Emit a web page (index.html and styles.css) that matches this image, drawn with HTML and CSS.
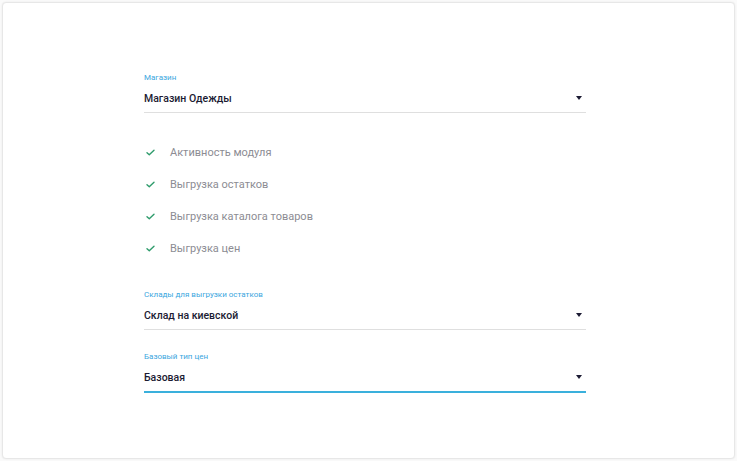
FILE: index.html
```html
<!DOCTYPE html>
<html lang="ru">
<head>
    <meta charset="UTF-8">
    <title>Настройки модуля</title>
    <link rel="stylesheet" href="styles.css">
</head>
<body>
    <div class="card">
        <div class="form">
            <div class="field">
                <div class="field-label">Магазин</div>
                <div class="field-value">
                    <span>Магазин Одежды</span>
                    <span class="arrow"></span>
                </div>
            </div>

            <ul class="checks">
                <li><svg class="check" viewBox="0 0 10 8"><path d="M1 4.2 L3.6 6.6 L9 1.4"/></svg>Активность модуля</li>
                <li><svg class="check" viewBox="0 0 10 8"><path d="M1 4.2 L3.6 6.6 L9 1.4"/></svg>Выгрузка остатков</li>
                <li><svg class="check" viewBox="0 0 10 8"><path d="M1 4.2 L3.6 6.6 L9 1.4"/></svg>Выгрузка каталога товаров</li>
                <li><svg class="check" viewBox="0 0 10 8"><path d="M1 4.2 L3.6 6.6 L9 1.4"/></svg>Выгрузка цен</li>
            </ul>

            <div class="field">
                <div class="field-label">Склады для выгрузки остатков</div>
                <div class="field-value">
                    <span>Склад на киевской</span>
                    <span class="arrow"></span>
                </div>
            </div>

            <div class="field field-active">
                <div class="field-label">Базовый тип цен</div>
                <div class="field-value">
                    <span>Базовая</span>
                    <span class="arrow"></span>
                </div>
            </div>
        </div>
    </div>
</body>
</html>
```

FILE: styles.css
```css
body {
    margin: 0;
    font-family: Roboto, 'Noto Sans', sans-serif;
    background: #fafafa;
}
.card {
    margin: 2px;
    height: 455px;
    background: #fff;
    border: 1px solid #e7e7e7;
    border-radius: 4px;
    box-shadow: 0 0 2px rgba(0, 0, 0, 0.08);
}
.form {
    width: 442px;
    padding: 69px 0 0 141px;
}
.field {
    margin-top: 21px;
}
.field:first-child {
    margin-top: 0;
}
.field-label {
    font-size: 8px;
    line-height: 12px;
    color: #3aa6de;
}
.field-value {
    display: flex;
    justify-content: space-between;
    align-items: center;
    margin-top: 4px;
    padding-bottom: 4px;
    height: 20px;
    font-size: 10.5px;
    font-weight: 500;
    color: #1c1b33;
    border-bottom: 1px solid #dfdfdf;
}
.field-active .field-value {
    border-bottom: 2px solid #3ab0dc;
}
.arrow {
    width: 0;
    height: 0;
    margin-right: 4px;
    border-left: 3px solid transparent;
    border-right: 3px solid transparent;
    border-top: 4px solid #1c1b33;
}
.checks {
    list-style: none;
    margin: 23px 0 25px;
    padding: 0;
}
.checks li {
    display: flex;
    align-items: center;
    height: 32px;
    font-size: 11px;
    color: #8c8c93;
}
.check {
    width: 9px;
    height: 7px;
    margin: 0 15px 0 2px;
    fill: none;
    stroke: #2f9c6c;
    stroke-width: 1.6;
    stroke-linecap: round;
    stroke-linejoin: round;
}
```
